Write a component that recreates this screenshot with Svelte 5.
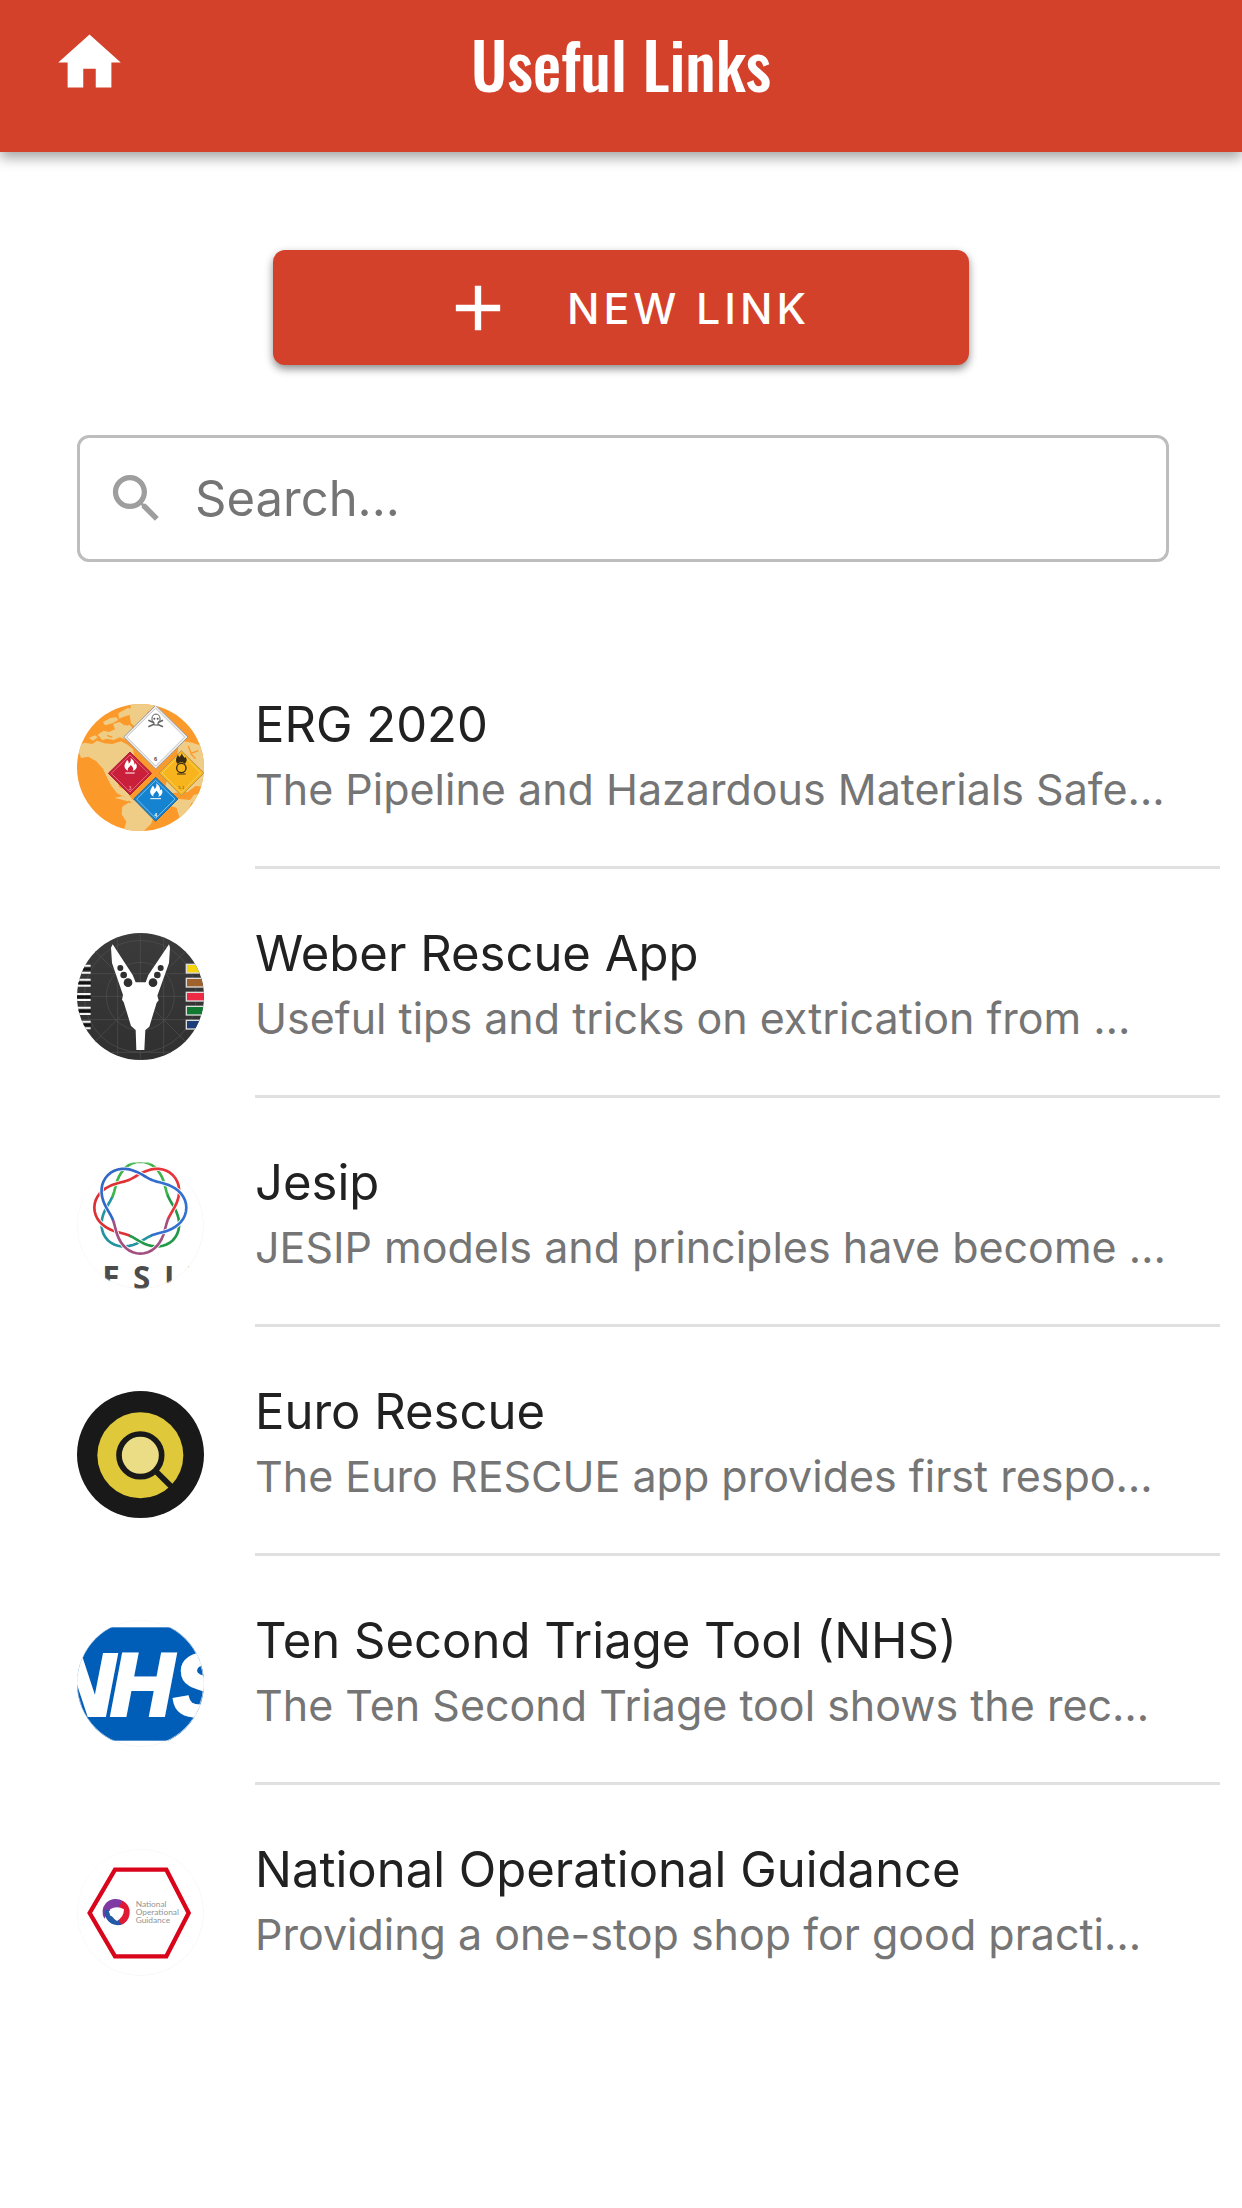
<script>
    let search = '';

    const links = [
        { icon: 'erg', title: 'ERG 2020', text: 'The Pipeline and Hazardous Materials Safe…' },
        { icon: 'weber', title: 'Weber Rescue App', text: 'Useful tips and tricks on extrication from …' },
        { icon: 'jesip', title: 'Jesip', text: 'JESIP models and principles have become …' },
        { icon: 'euro', title: 'Euro Rescue', text: 'The Euro RESCUE app provides first respo…' },
        { icon: 'nhs', title: 'Ten Second Triage Tool (NHS)', text: 'The Ten Second Triage tool shows the rec…' },
        { icon: 'nog', title: 'National Operational Guidance', text: 'Providing a one-stop shop for good practi…' }
    ];

    // one strand of the jesip ring per lobe, three turns for eight lobes
    function strand(deg) {
        let d = '';
        for (let i = -14; i <= 14; i++) {
            const off = i / 14 * 67.5;
            const r = 114 + 24 * Math.cos(off * 8 / 3 * Math.PI / 180);
            const a = (deg + off) * Math.PI / 180;
            d += (d ? 'L' : 'M') + (190 + r * Math.cos(a)).toFixed(1) + ' ' + (137 - r * Math.sin(a)).toFixed(1);
        }
        return d;
    }

    const strands = [
        { deg: 225, color: '#2495a0' },
        { deg: 90, color: '#3db54a' },
        { deg: 315, color: '#23994a' },
        { deg: 180, color: '#dc3034' },
        { deg: 45, color: '#e6343a' },
        { deg: 270, color: '#a34f80' },
        { deg: 135, color: '#3468c8' },
        { deg: 0, color: '#3470cf' }
    ];

    const bars = ['#f6d30c', '#a0622d', '#ee2b45', '#127a30', '#1b3d78'];
</script>

<header>
    <a class="home" href="#home" aria-label="Home">
        <svg viewBox="0 0 24 24"><path d="M10 20v-6h4v6h5v-8h3L12 3 2 12h3v8z"/></svg>
    </a>
    <h1>Useful Links</h1>
</header>

<main>
    <button class="new" type="button">
        <svg viewBox="0 0 24 24"><path d="M19 13h-6v6h-2v-6H5v-2h6V5h2v6h6v2z"/></svg>
        <span>NEW LINK</span>
    </button>

    <label class="search">
        <svg viewBox="0 0 24 24"><path d="M15.5 14h-.79l-.28-.27C15.41 12.59 16 11.11 16 9.5 16 5.91 13.09 3 9.5 3S3 5.91 3 9.5 5.91 16 9.5 16c1.61 0 3.09-.59 4.23-1.57l.27.28v.79l5 4.99L20.49 19l-4.99-5zm-6 0C7.01 14 5 11.99 5 9.5S7.01 5 9.5 5 14 7.01 14 9.5 11.99 14 9.5 14z"/></svg>
        <input type="text" placeholder="Search..." aria-label="Search" bind:value={search}>
    </label>

    <ul>
        {#each links as link}
            <li>
                <a href="#{link.icon}">
                    <svg class="avatar" viewBox="0 0 381 381" aria-hidden="true">
                        {#if link.icon == 'erg'}
                            <rect width="381" height="381" fill="#fb9a2b"/>
                            <g fill="#f0cd86">
                                <path d="M0 128l22-12 24 4 14-10 22 8 24 2 26-8 20 10 16 14 4 20-14 14-14 20-16 14-8 24 6 20 14 8 16-4 8 10-8 12 10 12 18 8 16 2-8 10-26-8-24-20-22-10-18-24-14-28-10-22-20-22-24-14-22 4z"/>
                                <path d="M62 92l18-12 16 4 18-8-6-16 20-6 14 10 16-2 10 12-14 12-10 20-16-6-18 8-20-4-14 4z"/>
                                <path d="M78 54l22-12 18-2 6 8-18 10-22 6zM124 28l28-16 22 4-8 14-26 8-14 6zM36 102l18-8 8 6-14 10z"/>
                                <path d="M162 0h80l-6 10-24 14-14 26-22 20-14-12-4-24z"/>
                                <path d="M136 308l18-12 26 2 18 12 18 8 14 20-8 22-22 21h-60l8-28-14-22z"/>
                                <path d="M304 124l16-12 26 4 35 12v166l-22-8-18 14-10 34-22 12-10-34-28-10-12-30 10-40 24-20 6-26z"/>
                            </g>
                            <path d="M334 126l8 22 22-8M342 150l14 14M90 94l16 6M66 76l10 4M142 56l12 8" stroke="#fb9a2b" stroke-width="4" fill="none"/>
                            <path d="M276 268l56-4 24-18 25 2v20l-30 4-12 16-62-6z" fill="#fb9a2b"/>
                            <path d="M112 282l24-6 24 12-8 4-22-6z" fill="#f0cd86"/>

                            <path d="M236 4l97 95-97 96-96-96z" fill="#eee" stroke="#999" stroke-width="3"/>
                            <path d="M236 13l87 86-87 87-87-87z" fill="#fff" stroke="#aaa" stroke-width="2"/>
                            <path d="M214 49l44 19M258 49l-44 19" stroke="#666" stroke-width="5"/>
                            <path d="M225 43c0-17 24-17 24 0v7l-6 5v8h-12v-8l-6-5z" fill="#fff" stroke="#555" stroke-width="3"/>
                            <circle cx="232" cy="44" r="3" fill="#555"/>
                            <circle cx="242" cy="44" r="3" fill="#555"/>
                            <text x="236" y="171" text-anchor="middle" font-size="17" font-weight="700" fill="#444">6</text>

                            <path d="M159 144l65 64-65 65-65-65z" fill="#c91f3a" stroke="#a32a3c" stroke-width="3"/>
                            <path d="M159 153l56 55-56 56-56-56z" fill="none" stroke="#ed8895" stroke-width="2"/>
                            <path d="M153 201c-20-13-6-25-3-33 6 4 5 9 5 11 7-6 8-12 5-18 12 8 14 17 11 22l5-5c9 12-2 22-9 23 5-9-2-14-6-18-2 6-12 9-8 18z" fill="#fff"/>
                            <path d="M145 207h28" stroke="#fff" stroke-width="3"/>
                            <text x="159" y="258" text-anchor="middle" font-size="14" fill="#f9bdc5">3</text>

                            <path d="M313 140l68 67-68 68-67-68z" fill="#f8b41c" stroke="#b99a50" stroke-width="3"/>
                            <path d="M313 149l58 58-58 59-58-59z" fill="none" stroke="#fbe27b" stroke-width="2"/>
                            <circle cx="313" cy="192" r="14" fill="none" stroke="#382c12" stroke-width="4"/>
                            <path d="M302 180c-11-14 0-22 0-28l6 8 7-12c1 10 8 10 7 14l4-3c7 10 0 15-2 21-6-7-16-7-22 0z" fill="#382c12"/>
                            <path d="M300 210h26" stroke="#382c12" stroke-width="3"/>
                            <text x="313" y="256" text-anchor="middle" font-size="13" fill="#69501b">5.1</text>

                            <path d="M236 220l67 65-67 67-66-67z" fill="#1683d0" stroke="#31698d" stroke-width="3"/>
                            <path d="M236 229l58 56-58 58-57-58z" fill="none" stroke="#a4dcff" stroke-width="2"/>
                            <path d="M230 278c-20-13-6-25-3-33 6 4 5 9 5 11 7-6 8-12 5-18 12 8 14 17 11 22l5-5c9 12-2 22-9 23 5-9-2-14-6-18-2 6-12 9-8 18z" fill="#fff"/>
                            <path d="M220 284h32" stroke="#fff" stroke-width="3"/>
                            <text x="236" y="338" text-anchor="middle" font-size="15" font-weight="700" fill="#fff">4</text>
                        {:else if link.icon == 'weber'}
                            <defs>
                                <linearGradient id="steel" x1="0" y1="0" x2="0" y2="1">
                                    <stop offset="0" stop-color="#3b3b3b"/>
                                    <stop offset="1" stop-color="#303030"/>
                                </linearGradient>
                            </defs>
                            <rect width="381" height="381" fill="url(#steel)"/>
                            <g fill="none" stroke="#525252" stroke-width="2">
                                <circle cx="190" cy="190" r="102"/>
                                <circle cx="190" cy="190" r="168"/>
                                <path d="M0 190h381M0 122h381M0 260h381M190 0v381M122 0v381M260 0v381M20 20l340 340M360 20L20 360M0 358h381"/>
                            </g>
                            <path d="M0 98h41M0 119h41M0 140h41M0 158h41M0 183h41M0 201h41M0 224h41M0 243h41M0 266h41M0 286h41" stroke="#f5f5f5" stroke-width="6"/>
                            <path d="M0 109h41M0 150h41M0 192h41M0 234h41M0 276h41" stroke="#111" stroke-width="6"/>
                            {#each bars as bar, i}
                                <rect x="328" y={94 + i * 42} width="60" height="26" fill={bar} stroke="#ddd" stroke-width="4"/>
                            {/each}
                            <path d="M107 34l60 92 9 22h30l8-22 62-92 3 10-3 46-35 98 4 14-6 7-22 72-12 10-3 60h-24l-2-60-14-12-22-72-5-7 3-14-33-96-3-46z" fill="#fff"/>
                            <g fill="#303030">
                                <circle cx="130" cy="105" r="9"/>
                                <circle cx="140" cy="126" r="10"/>
                                <circle cx="153" cy="149" r="13"/>
                                <circle cx="251" cy="105" r="9"/>
                                <circle cx="241" cy="126" r="10"/>
                                <circle cx="228" cy="149" r="13"/>
                            </g>
                        {:else if link.icon == 'jesip'}
                            <rect width="381" height="381" fill="#fff"/>
                            {#each strands as s}
                                <path d={strand(s.deg)} fill="none" stroke="#fff" stroke-width="13"/>
                                <path d={strand(s.deg)} fill="none" stroke={s.color} stroke-width="8" stroke-linecap="round"/>
                            {/each}
                            <g class="ring-name" font-size="94" font-weight="700" fill="#4c4c4c">
                                <text x="76" y="381">E</text>
                                <text x="168" y="381">S</text>
                                <text x="261" y="381">I</text>
                                <text x="326" y="381">P</text>
                            </g>
                            <circle cx="190" cy="190" r="190" fill="none" stroke="#f2f2f2" stroke-width="2"/>
                        {:else if link.icon == 'euro'}
                            <rect width="381" height="381" fill="#191919"/>
                            <circle cx="190" cy="193" r="129" fill="#dfc93a"/>
                            <path d="M232 236l62 62" stroke="#191919" stroke-width="17"/>
                            <circle cx="190" cy="193" r="64" fill="#eadd85" stroke="#191919" stroke-width="17"/>
                        {:else if link.icon == 'nhs'}
                            <rect width="381" height="381" fill="#fff"/>
                            <rect y="22" width="381" height="340" fill="#005eb8"/>
                            <g font-size="260" font-weight="700" font-style="italic" fill="#fff" stroke="#fff" stroke-width="12">
                                <text x="-76" y="286">N</text>
                                <text x="101" y="286">H</text>
                                <text x="290" y="286">S</text>
                            </g>
                            <circle cx="190" cy="190" r="190" fill="none" stroke="#f2f2f2" stroke-width="2"/>
                        {:else}
                            <rect width="381" height="381" fill="#fff"/>
                            <path d="M114 62h154l67 130-67 130H114L38 192z" fill="none" stroke="#d9051b" stroke-width="13"/>
                            <path d="M87 162a40 40 0 0 1 52-5l-8 18-37 12-12 22a40 40 0 0 1 5-47z" fill="#7f3aa3"/>
                            <path d="M137 155a40 40 0 0 1-9 74l-8-16 14-22-8-18z" fill="#e01934"/>
                            <path d="M83 182a40 40 0 0 0 50 45l-11-19-22-8-6-18z" fill="#2459a8"/>
                            <path d="M99 181q21-12 42 0q0 22-21 35q-21-13-21-35z" fill="#fff"/>
                            <g class="thin" font-size="25" fill="#949494">
                                <text x="176" y="173">National</text>
                                <text x="176" y="198">Operational</text>
                                <text x="176" y="223">Guidance</text>
                            </g>
                            <circle cx="190" cy="190" r="190" fill="none" stroke="#f2f2f2" stroke-width="2"/>
                        {/if}
                    </svg>
                    <span class="body">
                        <span class="title">{link.title}</span>
                        <span class="text">{link.text}</span>
                    </span>
                </a>
            </li>
        {/each}
    </ul>
</main>

<style>
    :global(body) {
        background: #fff;
        font-family: Inter, "Liberation Sans", sans-serif;
    }
    header {
        display: grid;
        grid-template-columns: 75px 1fr 75px;
        height: 152px;
        padding: 0 52px;
        box-sizing: border-box;
        background: #d4412b;
        color: #fff;
        box-shadow: 0 6px 12px rgba(0,0,0,0.35);
    }
    .home {
        padding-top: 25px;
        color: #fff;
    }
    .home svg {
        display: block;
        width: 75px;
        height: 75px;
        fill: currentColor;
    }
    h1 {
        margin: 0;
        padding-top: 23px;
        font-family: Oswald, "Liberation Sans Narrow", "Roboto Condensed", sans-serif;
        font-size: 64px;
        line-height: 80px;
        font-weight: 500;
        text-align: center;
        white-space: nowrap;
    }
    main {
        padding-top: 98px;
    }
    .new {
        display: flex;
        align-items: center;
        justify-content: center;
        gap: 51px;
        width: 56%;
        height: 115px;
        margin: 0 auto;
        padding: 0 0 0 8px;
        border: 0;
        border-radius: 12px;
        background: #d4412b;
        color: #fff;
        font-family: inherit;
        font-size: 43px;
        font-weight: 500;
        letter-spacing: 4px;
        box-shadow: 0 4px 8px rgba(0,0,0,0.45);
    }
    .new svg {
        width: 76px;
        height: 76px;
        fill: currentColor;
    }
    .search {
        display: flex;
        align-items: center;
        gap: 27px;
        height: 127px;
        margin: 70px 73px 0 77px;
        padding: 0 25px;
        box-sizing: border-box;
        border: 3px solid #bdbdbd;
        border-radius: 12px;
    }
    .search svg {
        flex: none;
        width: 63px;
        height: 63px;
        fill: #9e9e9e;
    }
    .search input {
        flex: 1;
        min-width: 0;
        padding: 0;
        border: 0;
        outline: 0;
        background: none;
        font-family: inherit;
        font-size: 49px;
        color: #222;
    }
    .search input::placeholder {
        color: #757575;
        opacity: 1;
    }
    ul {
        margin: 78px 0 0;
        padding: 0 22px 0 77px;
        list-style: none;
    }
    li a {
        display: flex;
        gap: 51px;
        color: #212121;
        text-decoration: none;
    }
    .avatar {
        flex: none;
        width: 127px;
        height: 127px;
        margin-top: 64px;
        border-radius: 50%;
        font-family: "Liberation Sans", sans-serif;
    }
    .ring-name {
        font-family: "Open Sans", sans-serif;
    }
    .thin {
        font-family: Lato, sans-serif;
    }
    .body {
        flex: 1;
        min-width: 0;
        height: 229px;
        padding-top: 52px;
        box-sizing: border-box;
        border-bottom: 3px solid #e0e0e0;
        white-space: nowrap;
    }
    li:last-child .body {
        border-bottom: 0;
    }
    .title, .text {
        display: block;
        line-height: 65px;
        overflow: hidden;
    }
    .title {
        font-size: 49px;
    }
    .text {
        font-size: 43px;
        color: #757575;
    }
</style>
